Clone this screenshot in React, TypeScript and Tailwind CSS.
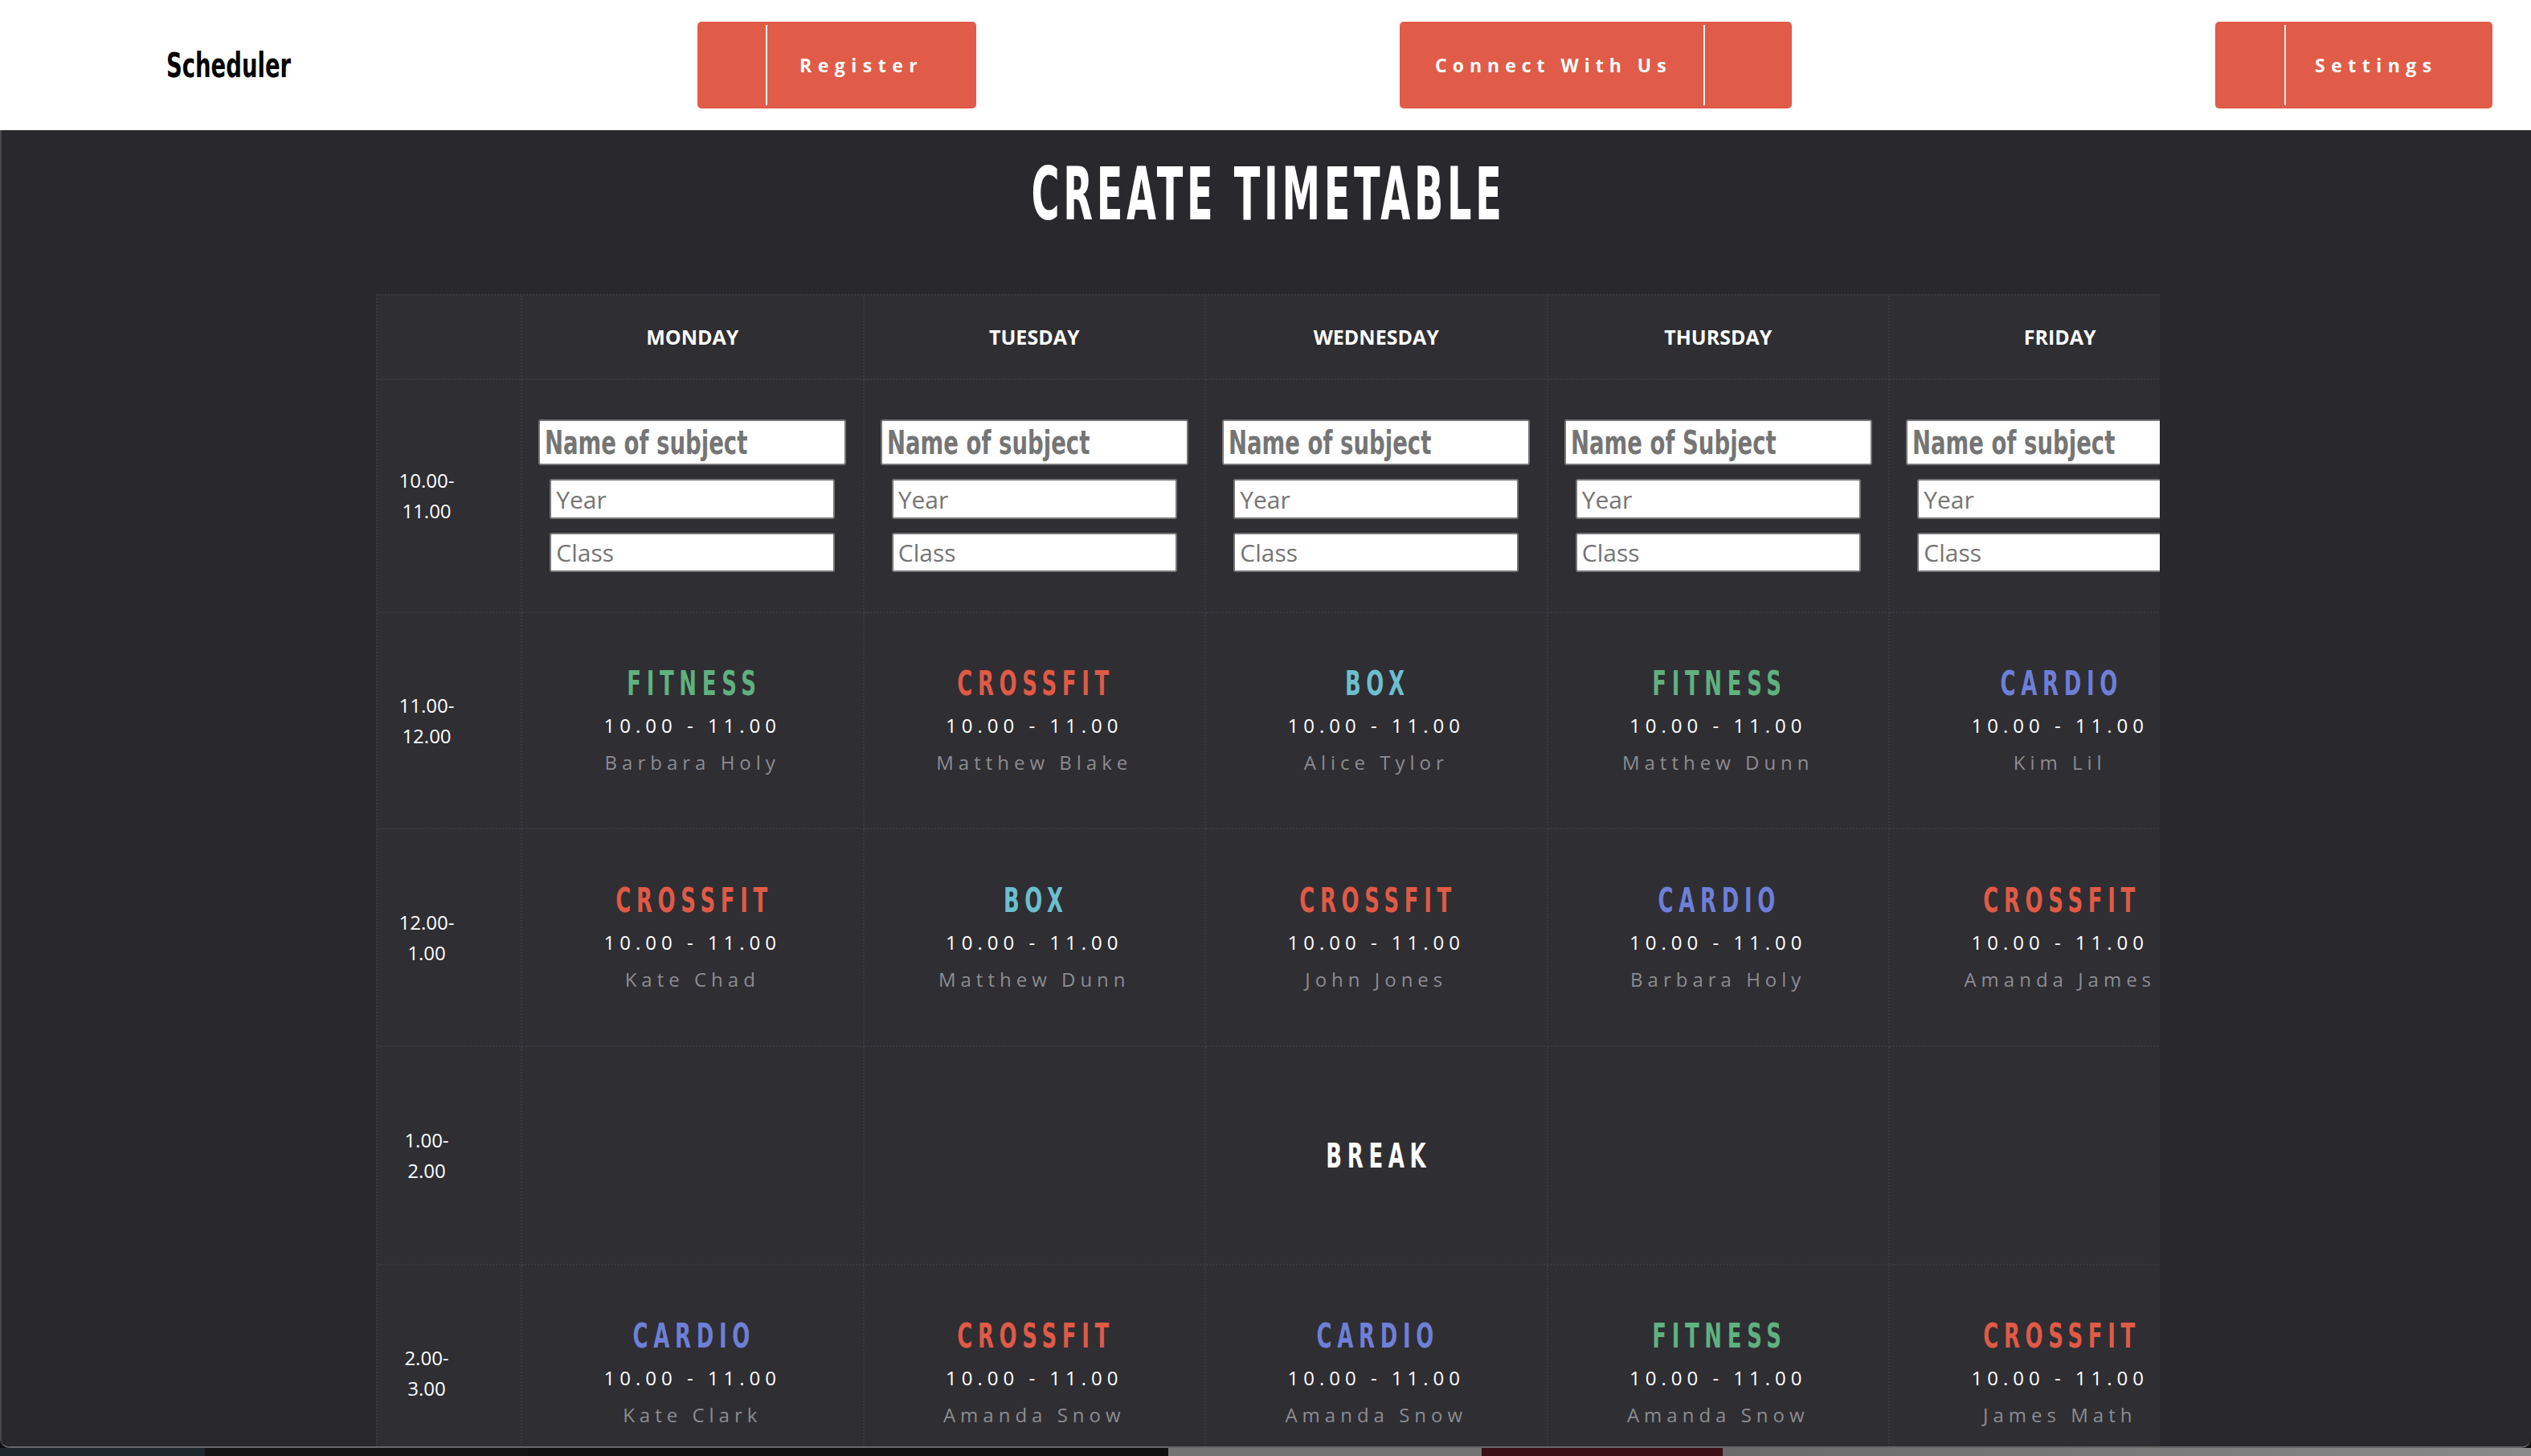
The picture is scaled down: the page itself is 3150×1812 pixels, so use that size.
import React from 'react';

const COND = "font-['DejaVu_Sans_Condensed','Liberation_Sans_Narrow',sans-serif] font-bold";
const BODY = "font-['Open_Sans','Noto_Sans',sans-serif]";
const CELL = 'border-r-2 border-b-2 border-dotted border-[#3b3a40]';

const days = ['MONDAY', 'TUESDAY', 'WEDNESDAY', 'THURSDAY', 'FRIDAY'];

const colors: Record<string, string> = {
  FITNESS: 'text-[#5fb17f]',
  CROSSFIT: 'text-[#e05a46]',
  BOX: 'text-[#6bbfcd]',
  CARDIO: 'text-[#6e7fd8]',
};

type Session = { name: string; teacher: string };

const rows: { time: [string, string]; sessions: Session[] | null }[] = [
  {
    time: ['11.00-', '12.00'],
    sessions: [
      { name: 'FITNESS', teacher: 'Barbara Holy' },
      { name: 'CROSSFIT', teacher: 'Matthew Blake' },
      { name: 'BOX', teacher: 'Alice Tylor' },
      { name: 'FITNESS', teacher: 'Matthew Dunn' },
      { name: 'CARDIO', teacher: 'Kim Lil' },
    ],
  },
  {
    time: ['12.00-', '1.00'],
    sessions: [
      { name: 'CROSSFIT', teacher: 'Kate Chad' },
      { name: 'BOX', teacher: 'Matthew Dunn' },
      { name: 'CROSSFIT', teacher: 'John Jones' },
      { name: 'CARDIO', teacher: 'Barbara Holy' },
      { name: 'CROSSFIT', teacher: 'Amanda James' },
    ],
  },
  { time: ['1.00-', '2.00'], sessions: null },
  {
    time: ['2.00-', '3.00'],
    sessions: [
      { name: 'CARDIO', teacher: 'Kate Clark' },
      { name: 'CROSSFIT', teacher: 'Amanda Snow' },
      { name: 'CARDIO', teacher: 'Amanda Snow' },
      { name: 'FITNESS', teacher: 'Amanda Snow' },
      { name: 'CROSSFIT', teacher: 'James Math' },
    ],
  },
];

function TimeCell({ time }: { time: [string, string] }) {
  return (
    <div className={`${CELL} flex items-center justify-center pr-[56px]`}>
      <div className={`${BODY} font-medium text-center text-[24px] leading-[38px] text-white`}>
        <div>{time[0]}</div>
        <div>{time[1]}</div>
      </div>
    </div>
  );
}

function SessionCell({ s }: { s: Session }) {
  return (
    <div className={`${CELL} flex flex-col items-center justify-center pt-[4px]`}>
      <span
        className={`${COND} inline-block mb-[6px] scale-x-[0.67] pl-[6px] text-[43px] leading-[48px] tracking-[10px] ${colors[s.name]}`}
      >
        {s.name}
      </span>
      <div className={`${BODY} font-medium text-[24px] leading-[46px] tracking-[6px] text-white`}>
        10.00 - 11.00
      </div>
      <div className={`${BODY} text-[24px] leading-[46px] tracking-[6px] text-[#8c8c90] whitespace-nowrap`}>
        {s.teacher}
      </div>
    </div>
  );
}

function InputCell({ subject }: { subject: string }) {
  return (
    <div className={`${CELL} flex flex-col items-center justify-center gap-[17px]`}>
      {/* subject field: the condensed hint text sits over an empty input */}
      <div className="relative w-[383px] h-[57px] shrink-0">
        <input
          aria-label={subject}
          className="w-full h-full bg-white border-2 border-[#767676] rounded-[3px] px-[8px] outline-none"
        />
        <span
          className={`${COND} pointer-events-none absolute left-[8px] top-0 h-full flex items-center origin-left scale-x-[0.765] text-[40px] text-[#757575] whitespace-nowrap`}
        >
          {subject}
        </span>
      </div>
      <input
        placeholder="Year"
        className={`${BODY} w-[355px] h-[50px] shrink-0 bg-white border-2 border-[#767676] rounded-[3px] px-[6px] text-[30px] text-[#333] placeholder:text-[#757575] outline-none`}
      />
      <input
        placeholder="Class"
        className={`${BODY} w-[355px] h-[49px] shrink-0 bg-white border-2 border-[#767676] rounded-[3px] px-[6px] text-[30px] text-[#333] placeholder:text-[#757575] outline-none`}
      />
    </div>
  );
}

export default function App() {
  return (
    <div className="w-[3150px] h-[1812px] overflow-hidden bg-[#111111] flex flex-col">
      <div className="h-[1802px] shrink-0 rounded-b-[12px] overflow-hidden border-b-2 border-[#666668] flex flex-col">
        {/* header */}
        <header className="h-[162px] shrink-0 bg-white flex items-center">
          <div className="w-[868px] pl-[207px]">
            <span className={`${COND} inline-block origin-left scale-x-[0.71] text-[43px] leading-none text-black`}>
              Scheduler
            </span>
          </div>
          <a className="w-[347px] h-[108px] rounded-[5px] bg-[#e05c48] flex items-stretch py-[4px] cursor-pointer">
            <span className="w-[85px]" />
            <span className="w-[2px] bg-white/90" />
            <span className={`${BODY} flex items-center pl-[40px] text-[23px] font-bold tracking-[7.5px] text-white`}>
              Register
            </span>
          </a>
          <a className="ml-[527px] w-[488px] h-[108px] rounded-[5px] bg-[#e05c48] flex items-stretch py-[4px] cursor-pointer">
            <span className={`${BODY} w-[378px] flex items-center pl-[44px] text-[23px] font-bold tracking-[7px] text-white whitespace-nowrap`}>
              Connect With Us
            </span>
            <span className="w-[2px] bg-white/90" />
            <span className="flex-1" />
          </a>
          <a className="ml-[527px] w-[345px] h-[108px] rounded-[5px] bg-[#e05c48] flex items-stretch py-[4px] cursor-pointer">
            <span className="w-[86px]" />
            <span className="w-[2px] bg-white/90" />
            <span className={`${BODY} flex items-center pl-[36px] text-[23px] font-bold tracking-[7.5px] text-white`}>
              Settings
            </span>
          </a>
        </header>

        {/* body */}
        <main className="flex-1 bg-[#29282d] border-l-2 border-[#48474d] overflow-hidden">
          <div className="pt-[35px] h-[127px] text-center">
            <span className={`${COND} inline-block scale-x-[0.59] pl-[8px] text-[90px] leading-none tracking-[8px] text-white`}>
              CREATE TIMETABLE
            </span>
          </div>

          <div className="mt-[77px] ml-[466px] w-[2220px] overflow-hidden bg-[#2f2e33]">
            <div className="grid w-[2307.5px] grid-cols-[180px_repeat(5,425.5px)] grid-rows-[105px_290px_269px_271px_272px_270px] border-t-2 border-l-2 border-dotted border-[#3b3a40]">
              {/* day header */}
              <div className={CELL} />
              {days.map((d) => (
                <div key={d} className={`${CELL} ${BODY} flex items-center justify-center text-[25px] font-bold text-white`}>
                  {d}
                </div>
              ))}

              {/* input row */}
              <TimeCell time={['10.00-', '11.00']} />
              <InputCell subject="Name of subject" />
              <InputCell subject="Name of subject" />
              <InputCell subject="Name of subject" />
              <InputCell subject="Name of Subject" />
              <InputCell subject="Name of subject" />

              {rows.map((r) => (
                <React.Fragment key={r.time[0]}>
                  <TimeCell time={r.time} />
                  {r.sessions ? (
                    r.sessions.map((s, i) => <SessionCell key={i} s={s} />)
                  ) : (
                    <div className="col-span-5 relative grid grid-cols-5 border-b-2 border-dotted border-[#3b3a40]">
                      <div className="border-r-2 border-dotted border-[#3b3a40]" />
                      <div className="border-r-2 border-dotted border-[#3b3a40]" />
                      <div className="border-r-2 border-dotted border-[#3b3a40]" />
                      <div className="border-r-2 border-dotted border-[#3b3a40]" />
                      <div />
                      <div className="absolute inset-0 flex items-center justify-center">
                        <span className={`${COND} inline-block scale-x-[0.67] pl-[6px] text-[43px] leading-[48px] tracking-[10px] text-white`}>
                          BREAK
                        </span>
                      </div>
                    </div>
                  )}
                </React.Fragment>
              ))}
            </div>
          </div>
        </main>
      </div>

      {/* desktop behind the window */}
      <div className="flex-1 flex">
        <div className="w-[255px] bg-[#1e272b]" />
        <div className="w-[402px] bg-[#141414]" />
        <div className="w-[797px] bg-[#101010]" />
        <div className="w-[390px] bg-[#737373]" />
        <div className="w-[300px] bg-[#3a1016]" />
        <div className="flex-1 bg-gradient-to-r from-[#6a6a6a] to-[#8a8a8a]" />
      </div>
    </div>
  );
}
